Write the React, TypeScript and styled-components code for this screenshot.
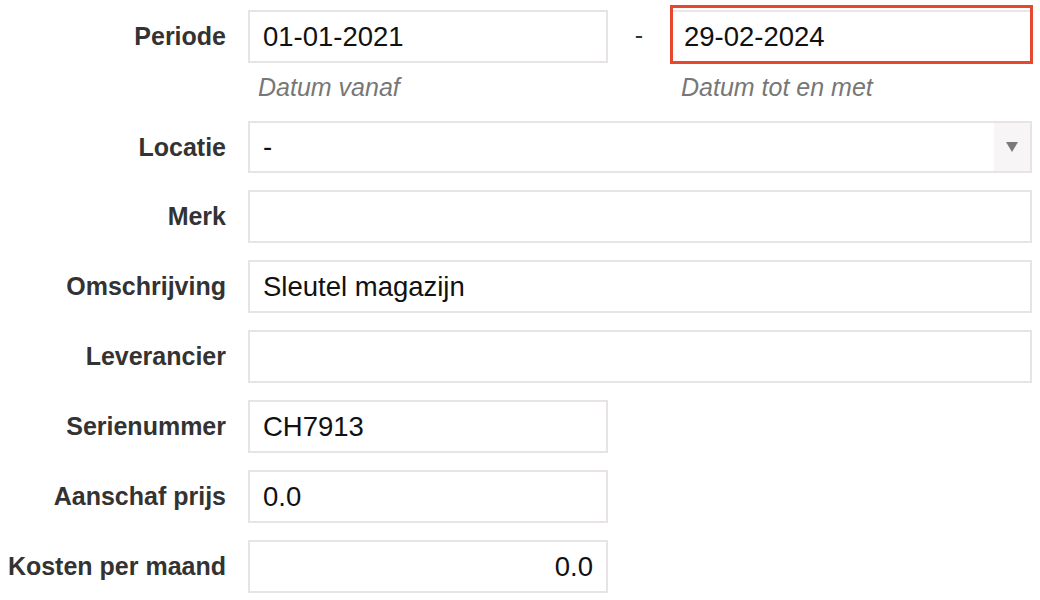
import React from 'react';
import styled, { createGlobalStyle } from 'styled-components';

const GlobalStyle = createGlobalStyle`
  body {
    margin: 0;
    background: #ffffff;
    font-family: 'Liberation Sans', Arial, Helvetica, sans-serif;
  }
`;

const Form = styled.form`
  display: flex;
  flex-direction: column;
  gap: 17px;
  padding: 10px 8px 0 0;
  width: 1040px;
  box-sizing: border-box;
`;

const Row = styled.div<{ $shift?: number }>`
  display: grid;
  grid-template-columns: 226px 1fr;
  column-gap: 22px;
  align-items: start;
  margin-top: ${p => p.$shift || 0}px;
`;

const Label = styled.label`
  display: block;
  height: 52px;
  line-height: 52px;
  text-align: right;
  font-size: 25px;
  font-weight: bold;
  color: #333333;
  white-space: nowrap;
`;

const Field = styled.input<{ $narrow?: boolean; $right?: boolean }>`
  display: block;
  box-sizing: border-box;
  width: ${p => (p.$narrow ? '360px' : '100%')};
  height: 53px;
  margin: 0;
  padding: 0 13px;
  border: 2px solid #e8e3e5;
  border-radius: 0;
  background: #ffffff;
  font-family: 'Liberation Sans', Arial, sans-serif;
  font-size: 27.5px;
  color: #111111;
  text-align: ${p => (p.$right ? 'right' : 'left')};
  outline: none;
`;

const PeriodGrid = styled.div`
  display: grid;
  grid-template-columns: 360px 62px 1fr;
  align-items: start;
`;

const Dash = styled.span`
  height: 53px;
  line-height: 50px;
  text-align: center;
  font-size: 25px;
  color: #333333;
`;

const Hint = styled.div<{ $indent: number; $gap: number }>`
  margin-top: ${p => p.$gap}px;
  padding-left: ${p => p.$indent}px;
  font-size: 25px;
  line-height: 30px;
  font-style: italic;
  color: #777777;
`;

const ErrorBox = styled.div`
  margin-top: -5px;
  border: 3px solid #e8472f;
  padding-top: 2px;
  width: 363px;
  box-sizing: border-box;
`;

const ErrorField = styled(Field)`
  border: none;
  border-top: 2px solid #ebe6e7;
  height: 51px;
  padding: 0 11px;
`;

const SelectBox = styled.div`
  display: flex;
  box-sizing: border-box;
  height: 52px;
  border: 2px solid #e8e3e5;
  background: #ffffff;
`;

const SelectValue = styled.div`
  flex: 1;
  padding-left: 13px;
  line-height: 48px;
  font-size: 27.5px;
  color: #111111;
`;

const Caret = styled.div`
  width: 36px;
  background: #f7f5f6;
  display: flex;
  align-items: center;
  justify-content: center;
`;

const App: React.FC = () => (
  <>
    <GlobalStyle />
    <Form onSubmit={e => e.preventDefault()}>
      <Row>
        <Label style={{ height: 53, lineHeight: '53px' }}>Periode</Label>
        <PeriodGrid>
          <div>
            <Field $narrow readOnly value="01-01-2021" />
            <Hint $indent={10} $gap={9}>Datum vanaf</Hint>
          </div>
          <Dash>-</Dash>
          <div>
            <ErrorBox>
              <ErrorField readOnly value="29-02-2024" />
            </ErrorBox>
            <Hint $indent={11} $gap={8}>Datum tot en met</Hint>
          </div>
        </PeriodGrid>
      </Row>
      <Row $shift={2}>
        <Label>Locatie</Label>
        <SelectBox>
          <SelectValue>-</SelectValue>
          <Caret>
            <svg width="12" height="10" viewBox="0 0 12 10">
              <path d="M0 0 L12 0 L6 10 Z" fill="#7a7a7a" />
            </svg>
          </Caret>
        </SelectBox>
      </Row>
      <Row>
        <Label>Merk</Label>
        <Field readOnly value="" />
      </Row>
      <Row>
        <Label>Omschrijving</Label>
        <Field readOnly value="Sleutel magazijn" />
      </Row>
      <Row>
        <Label>Leverancier</Label>
        <Field readOnly value="" />
      </Row>
      <Row>
        <Label>Serienummer</Label>
        <Field $narrow readOnly value="CH7913" />
      </Row>
      <Row>
        <Label>Aanschaf prijs</Label>
        <Field $narrow readOnly value="0.0" />
      </Row>
      <Row>
        <Label>Kosten per maand</Label>
        <Field $narrow $right readOnly value="0.0" />
      </Row>
    </Form>
  </>
);

export default App;
